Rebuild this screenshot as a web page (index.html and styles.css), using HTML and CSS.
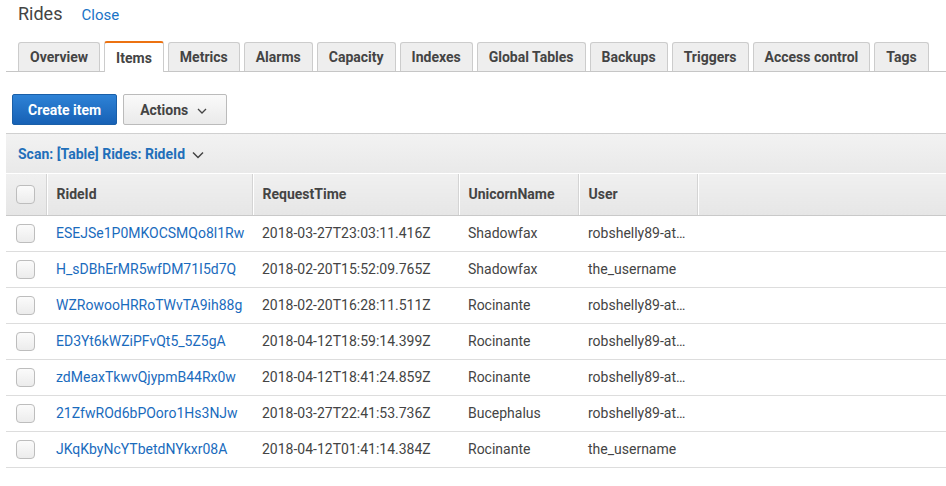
FILE: index.html
```html
<!DOCTYPE html>
<html>
<head>
<meta charset="utf-8">
<link rel="stylesheet" href="styles.css">
</head>
<body>
<div class="page">
  <div class="title-row">
    <span class="title">Rides</span>
    <a class="close">Close</a>
  </div>
  <div class="tabs">
    <div class="tab">Overview</div>
    <div class="tab active">Items</div>
    <div class="tab">Metrics</div>
    <div class="tab">Alarms</div>
    <div class="tab">Capacity</div>
    <div class="tab">Indexes</div>
    <div class="tab">Global Tables</div>
    <div class="tab">Backups</div>
    <div class="tab">Triggers</div>
    <div class="tab">Access control</div>
    <div class="tab">Tags</div>
  </div>
  <div class="toolbar">
    <button class="btn primary">Create item</button>
    <button class="btn secondary">Actions <svg class="caret" width="10" height="6" viewBox="0 0 10 6"><path d="M1 1l4 4 4-4" fill="none" stroke="#444" stroke-width="1.3"/></svg></button>
  </div>
  <div class="panel">
    <div class="scanbar">Scan: [Table] Rides: RideId <svg class="scan-caret" width="12" height="8" viewBox="0 0 12 8"><path d="M1 1.5l5 5 5-5" fill="none" stroke="#444" stroke-width="1.5"/></svg></div>
    <table class="grid">
      <colgroup>
        <col class="c-check"><col class="c-id"><col class="c-time"><col class="c-name"><col class="c-user"><col>
      </colgroup>
      <thead>
        <tr>
          <th><span class="cb"></span></th>
          <th>RideId</th>
          <th>RequestTime</th>
          <th>UnicornName</th>
          <th>User</th>
          <th class="last"></th>
        </tr>
      </thead>
      <tbody>
        <tr><td><span class="cb"></span></td><td class="link">ESEJSe1P0MKOCSMQo8l1Rw</td><td>2018-03-27T23:03:11.416Z</td><td>Shadowfax</td><td class="trunc">robshelly89-at…</td><td></td></tr>
        <tr><td><span class="cb"></span></td><td class="link">H_sDBhErMR5wfDM71I5d7Q</td><td>2018-02-20T15:52:09.765Z</td><td>Shadowfax</td><td class="trunc">the_username</td><td></td></tr>
        <tr><td><span class="cb"></span></td><td class="link">WZRowooHRRoTWvTA9ih88g</td><td>2018-02-20T16:28:11.511Z</td><td>Rocinante</td><td class="trunc">robshelly89-at…</td><td></td></tr>
        <tr><td><span class="cb"></span></td><td class="link">ED3Yt6kWZiPFvQt5_5Z5gA</td><td>2018-04-12T18:59:14.399Z</td><td>Rocinante</td><td class="trunc">robshelly89-at…</td><td></td></tr>
        <tr><td><span class="cb"></span></td><td class="link">zdMeaxTkwvQjypmB44Rx0w</td><td>2018-04-12T18:41:24.859Z</td><td>Rocinante</td><td class="trunc">robshelly89-at…</td><td></td></tr>
        <tr><td><span class="cb"></span></td><td class="link">21ZfwROd6bPOoro1Hs3NJw</td><td>2018-03-27T22:41:53.736Z</td><td>Bucephalus</td><td class="trunc">robshelly89-at…</td><td></td></tr>
        <tr><td><span class="cb"></span></td><td class="link">JKqKbyNcYTbetdNYkxr08A</td><td>2018-04-12T01:41:14.384Z</td><td>Rocinante</td><td class="trunc">the_username</td><td></td></tr>
      </tbody>
    </table>
  </div>
</div>
</body>
</html>
```

FILE: styles.css
```css
* { box-sizing: border-box; }
html, body { margin: 0; padding: 0; background: #fff; }
body {
  font-family: Roboto, "Liberation Sans", Arial, sans-serif;
  color: #444;
  font-size: 14px;
  overflow: hidden;
}
.page { width: 946px; }

.title-row {
  display: flex;
  align-items: baseline;
  gap: 19px;
  padding: 3px 0 0 18px;
  height: 42px;
}
.title { font-size: 18px; line-height: 22px; color: #444; }
.close { font-size: 15px; color: #1a73c6; }

.tabs {
  display: flex;
  gap: 4px;
  margin-left: 6px;
  padding-left: 12px;
  border-bottom: 1px solid #c6c6c6;
  height: 30px;
  align-items: flex-end;
}
.tab {
  height: 29px;
  line-height: 29px;
  padding: 0 11px;
  background: #eee;
  border: 1px solid #ccc;
  border-bottom: none;
  border-radius: 3px 3px 0 0;
  font-weight: 700;
  font-size: 14px;
  color: #444;
}
.tab.active {
  background: #fff;
  border-top: 2px solid #ec7211;
  height: 31px;
  margin-bottom: -1px;
  line-height: 31px;
}

.toolbar {
  display: flex;
  gap: 6px;
  padding: 22px 0 0 12px;
  height: 61px;
}
.btn {
  font-family: inherit;
  font-size: 14px;
  font-weight: 700;
  height: 31px;
  border-radius: 2px;
  display: inline-flex;
  align-items: center;
  cursor: pointer;
}
.btn.primary {
  color: #fff;
  background: linear-gradient(#2e82d6, #1761b5);
  border: 1px solid #1a5fa8;
  padding: 0 15px;
}
.btn.secondary {
  color: #444;
  background: linear-gradient(#fafafa, #eaeaea);
  border: 1px solid #bbb;
  padding: 0 19px 0 16px;
  gap: 9px;
}
.caret { margin-top: 2px; }

.panel {
  margin-left: 6px;
  border-top: 1px solid #d0d0d0;
}
.scanbar {
  height: 40px;
  padding-left: 12px;
  display: flex;
  align-items: center;
  gap: 7px;
  font-weight: 700;
  color: #1f6fba;
  background: linear-gradient(#f2f2f2, #e9e9e9);
  border-bottom: 1px solid #fff;
}
.scan-caret { margin-top: 3px; }

.grid {
  width: 940px;
  border-collapse: collapse;
  table-layout: fixed;
}
.c-check { width: 40px; }
.c-id { width: 206px; }
.c-time { width: 206px; }
.c-name { width: 120px; }
.c-user { width: 119px; }

.grid th {
  height: 41px;
  text-align: left;
  font-weight: 700;
  color: #444;
  padding: 0 10px;
  background: linear-gradient(#f0f0f0, #e6e6e6);
  border-bottom: 1px solid #c9c9c9;
  border-right: 1px solid #d4d4d4;
  box-shadow: inset 1px 0 0 #fff;
}
.grid th:first-child { box-shadow: none; }
.grid th.last { border-right: none; }
.grid td {
  height: 36px;
  padding: 0 10px;
  border-bottom: 1px solid #ddd;
  color: #444;
  white-space: nowrap;
  overflow: hidden;
}
.grid td.link { color: #1a6bbd; }
.grid td.trunc { text-overflow: clip; }

.cb {
  display: block;
  width: 19px;
  height: 19px;
  border: 1px solid #bdbdbd;
  border-radius: 4px;
  background: linear-gradient(#fbfbfb, #ececec);
}
```
